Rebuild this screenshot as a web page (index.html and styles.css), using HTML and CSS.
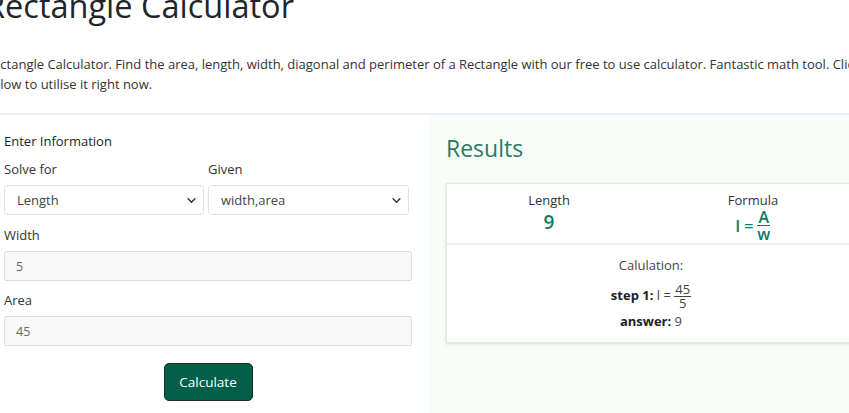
FILE: index.html
```html
<!DOCTYPE html>
<html lang="en">
<head>
    <meta charset="UTF-8">
    <meta name="viewport" content="width=device-width, initial-scale=1.0">
    <title>Rectangle Calculator</title>
    <link rel="stylesheet" href="styles.css">
</head>
<body>
    <div class="intro">
        <h1>Rectangle Calculator</h1>
        <p class="lead">Rectangle Calculator. Find the area, length, width, diagonal and perimeter of a Rectangle with our free to use calculator. Fantastic math tool. Click the button<br>below to utilise it right now.</p>
    </div>

    <div class="calc">
        <div class="calc-form">
            <div class="form-title">Enter Information</div>
            <div class="form-row">
                <div class="form-col">
                    <label class="label">Solve for</label>
                    <div class="select-wrap">
                        <select class="select">
                            <option>Length</option>
                        </select>
                        <svg class="chevron" viewBox="0 0 16 16" width="9" height="9"><path d="M2 5l6 6 6-6" fill="none" stroke="#333" stroke-width="2.6" stroke-linecap="round" stroke-linejoin="round"/></svg>
                    </div>
                </div>
                <div class="form-col">
                    <label class="label">Given</label>
                    <div class="select-wrap">
                        <select class="select">
                            <option>width,area</option>
                        </select>
                        <svg class="chevron" viewBox="0 0 16 16" width="9" height="9"><path d="M2 5l6 6 6-6" fill="none" stroke="#333" stroke-width="2.6" stroke-linecap="round" stroke-linejoin="round"/></svg>
                    </div>
                </div>
            </div>
            <label class="label">Width</label>
            <input class="input" type="text" value="5">
            <label class="label label-area">Area</label>
            <input class="input" type="text" value="45">
            <div class="button-container">
                <button class="button">Calculate</button>
            </div>
        </div>

        <div class="calc-results">
            <h3 class="results-title">Results</h3>
            <div class="card">
                <div class="card-top">
                    <div class="card-cell">
                        <div class="cell-label">Length</div>
                        <div class="cell-value">9</div>
                    </div>
                    <div class="card-cell">
                        <div class="cell-label">Formula</div>
                        <div class="cell-formula">
                            <span>l =</span>
                            <span class="frac frac-green"><span class="num">A</span><span class="den">w</span></span>
                        </div>
                    </div>
                </div>
                <div class="card-bottom">
                    <div class="calc-line">Calulation:</div>
                    <div class="calc-line"><b>step 1:</b> l = <span class="frac"><span class="num">45</span><span class="den">5</span></span></div>
                    <div class="calc-line"><b>answer:</b> 9</div>
                </div>
            </div>
        </div>
    </div>
</body>
</html>
```

FILE: styles.css
```css
body {
    font-family: "Open Sans", Arial, sans-serif;
    font-size: 13px;
    margin: 0;
    color: #212529;
    background-color: #fff;
    overflow: hidden;
}

.intro {
    display: flow-root;
    margin-left: -15px;
    height: 113px;
}

h1 {
    font-size: 32.5px;
    font-weight: 400;
    line-height: 36px;
    margin: -12px 0 0 0;
}

.lead {
    margin: 30px 0 0 0;
    line-height: 20px;
    white-space: nowrap;
    color: #333;
}

.calc {
    display: flex;
    border-top: 2px solid #eeeeee;
    height: 300px;
}

.calc-form {
    width: 408px;
    padding: 16px 16px 0 4px;
}

.form-title {
    line-height: 20px;
    margin-bottom: 8px;
}

.form-row {
    display: flex;
    gap: 4px;
}

.form-col {
    width: 200px;
}

.form-col:last-child {
    width: 201px;
}

.label {
    display: block;
    line-height: 20px;
    margin-bottom: 6px;
    color: #333;
}

.select-wrap {
    position: relative;
}

.select {
    appearance: none;
    width: 100%;
    height: 30px;
    border: 1px solid #dee2e6;
    border-radius: 4px;
    background: #fff;
    font-family: inherit;
    font-size: 13px;
    color: #444;
    padding: 0 12px;
    margin-bottom: 10px;
}

.chevron {
    position: absolute;
    right: 8px;
    top: 11px;
}

.input {
    display: block;
    box-sizing: border-box;
    width: 408px;
    height: 30px;
    border: 1px solid #dddddd;
    border-radius: 2px;
    background: #f8f8f8;
    font-family: inherit;
    font-size: 12.5px;
    color: #666;
    padding: 0 11px;
}

.label-area {
    margin-top: 9px;
}

.button-container {
    text-align: center;
    margin-top: 17px;
}

.button {
    background-color: #035f47;
    color: #fff;
    border: 1px solid #1e2a26;
    border-radius: 5px;
    width: 89px;
    height: 38px;
    font-family: inherit;
    font-size: 13.5px;
    cursor: pointer;
}

.calc-results {
    flex: 1;
    background-color: #f7fcf9;
    padding: 16px 0 0 18px;
}

.results-title {
    font-size: 23px;
    font-weight: 400;
    color: #2a7a64;
    margin: 0 0 18px 0;
    line-height: 34px;
}

.card {
    width: 408px;
    background: #fff;
    border: 1px solid #e6e6e6;
    box-shadow: 0 1px 3px rgba(0, 0, 0, 0.12);
    height: 158px;
}

.card-top {
    display: flex;
    height: 59px;
    border-bottom: 2px solid #eeeeee;
}

.card-cell {
    flex: 1;
    text-align: center;
    padding-top: 7px;
}

.cell-label {
    line-height: 18px;
    color: #333;
}

.cell-value {
    font-size: 19px;
    font-weight: 600;
    color: #0d7a60;
    line-height: 26px;
}

.cell-formula {
    display: flex;
    justify-content: center;
    align-items: center;
    gap: 4px;
    color: #0d7a60;
    font-weight: 600;
    font-size: 16px;
}

.frac {
    display: inline-flex;
    flex-direction: column;
    vertical-align: middle;
    text-align: center;
    line-height: 1;
}

.frac .num {
    border-bottom: 1px solid currentColor;
    padding: 0 1px;
}

.frac-green {
    font-size: 16px;
}

.card-bottom {
    text-align: center;
    padding-top: 10px;
    color: #444;
}

.calc-line {
    height: 20px;
    line-height: 20px;
    margin-bottom: 8px;
}

.calc-line b {
    color: #222;
}

.calc-line .frac {
    font-size: 13px;
}
```
